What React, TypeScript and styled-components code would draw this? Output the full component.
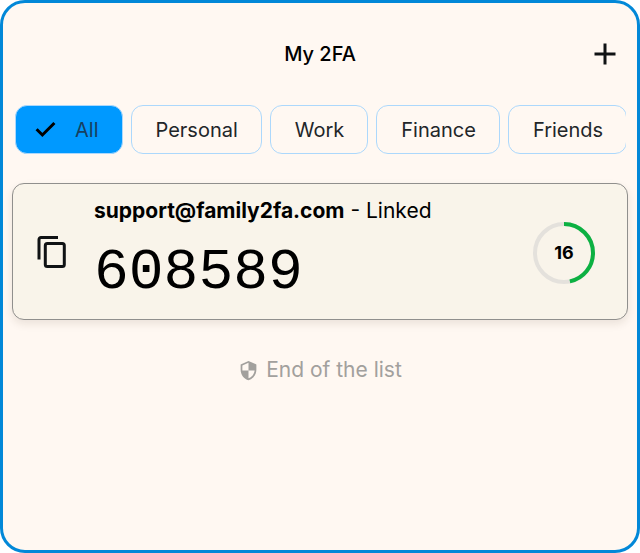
import React, { useState } from "react";
import styled, { createGlobalStyle } from "styled-components";
import { MdAdd, MdSecurity } from "react-icons/md";

const GlobalStyle = createGlobalStyle`
  * { box-sizing: border-box; }
  body {
    margin: 0;
    background: #ffffff;
    color: #000000;
    font-family: Inter, "Liberation Sans", sans-serif;
    font-size: 20px;
    line-height: 24px;
  }
  button { font: inherit; color: inherit; cursor: pointer; }
  svg { display: block; flex-shrink: 0; }
`;

const Screen = styled.main`
  display: flex;
  flex-direction: column;
  min-height: 100vh;
  border: 3px solid #0288d8;
  border-radius: 25px;
  background: #fff8f2;
`;

const Header = styled.header`
  display: grid;
  grid-template-columns: 36px 1fr 36px;
  align-items: center;
  padding: 33px 14px;
`;

const Title = styled.h1`
  grid-column: 2;
  margin: 0;
  font-size: 20px;
  font-weight: 500;
  text-align: center;
`;

const IconButton = styled.button`
  display: flex;
  padding: 0;
  border: 0;
  background: none;
  color: #101214;
`;

const Filters = styled.nav`
  display: flex;
  gap: 8px;
  margin: 0 11px 0 12px;
  overflow: hidden;
`;

const Chip = styled.button<{ $active: boolean }>`
  display: flex;
  flex-shrink: 0;
  align-items: center;
  gap: 16px;
  height: 49px;
  padding: ${(p) => (p.$active ? "0 23px 0 16px" : "0 23px 0 24px")};
  border: 1px solid #acd8fc;
  border-radius: 12px;
  background: ${(p) => (p.$active ? "#0099ff" : "transparent")};
  color: ${(p) => (p.$active ? "#17405f" : "#222629")};

  svg { color: #000000; }
`;

const Card = styled.article`
  display: flex;
  align-items: center;
  margin: 29px 9px 0;
  height: 137px;
  padding: 2px 31px 0 22px;
  border: 1px solid #908f8d;
  border-radius: 12px;
  background: #f9f4ea;
  box-shadow: 0 4px 8px rgba(60, 40, 20, 0.1);
`;

const Details = styled.div`
  display: flex;
  flex: 1;
  flex-direction: column;
  align-self: stretch;
  gap: 18px;
  margin-left: 24px;
  padding-top: 13px;
`;

const Account = styled.div`
  font-size: 21px;
  white-space: nowrap;
  strong { font-weight: 700; }
`;

const Code = styled.output`
  font-family: "Liberation Mono", monospace;
  font-size: 58px;
  line-height: 64px;
`;

const Timer = styled.div`
  display: grid;
  place-items: center;
  width: 64px;
  height: 64px;

  > * { grid-area: 1 / 1; }
`;

const Seconds = styled.span`
  font-size: 18px;
  font-weight: 700;
`;

const Footer = styled.footer`
  display: flex;
  align-items: center;
  justify-content: center;
  gap: 7px;
  margin-top: 38px;
  font-size: 21px;
  color: #a2a09d;
`;

const filters = ["All", "Personal", "Work", "Finance", "Friends"];

function CheckIcon() {
  return (
    <svg width="27" height="27" viewBox="0 0 27 27" fill="none" stroke="currentColor" strokeWidth="3" aria-hidden="true">
      <path d="M4.6 13.2 10.4 19 22.4 7" />
    </svg>
  );
}

function CopyIcon() {
  return (
    <svg width="35" height="35" viewBox="0 0 35 35" fill="none" stroke="currentColor" strokeWidth="3" aria-hidden="true">
      <path d="M4 24.5V4.5a2 2 0 0 1 2-2H23" />
      <rect x="10.3" y="8.5" width="19" height="23" rx="2" />
    </svg>
  );
}

function Countdown({ seconds, period }: { seconds: number; period: number }) {
  const length = 2 * Math.PI * 29;
  const shown = (length * (period - seconds)) / period;
  return (
    <Timer role="timer">
      <svg width="64" height="64" viewBox="0 0 64 64" fill="none" strokeWidth="4" aria-hidden="true">
        <circle cx="32" cy="32" r="29" stroke="#e4e1dc" />
        <circle
          cx="32"
          cy="32"
          r="29"
          stroke="#0cb142"
          strokeDasharray={`${shown} ${length}`}
          transform="rotate(-90 32 32)"
        />
      </svg>
      <Seconds>{seconds}</Seconds>
    </Timer>
  );
}

export default function App() {
  const [active, setActive] = useState("All");
  return (
    <>
      <GlobalStyle />
      <Screen>
        <Header>
          <Title>My 2FA</Title>
          <IconButton type="button" aria-label="Add account">
            <MdAdd size={36} />
          </IconButton>
        </Header>
        <Filters aria-label="Groups">
          {filters.map((name) => (
            <Chip
              key={name}
              type="button"
              $active={name === active}
              aria-pressed={name === active}
              onClick={() => setActive(name)}
            >
              {name === active && <CheckIcon />}
              {name}
            </Chip>
          ))}
        </Filters>
        <Card>
          <IconButton type="button" aria-label="Copy code">
            <CopyIcon />
          </IconButton>
          <Details>
            <Account>
              <strong>support@family2fa.com</strong> - Linked
            </Account>
            <Code>608589</Code>
          </Details>
          <Countdown seconds={16} period={30} />
        </Card>
        <Footer>
          <MdSecurity size={21} />
          End of the list
        </Footer>
      </Screen>
    </>
  );
}
